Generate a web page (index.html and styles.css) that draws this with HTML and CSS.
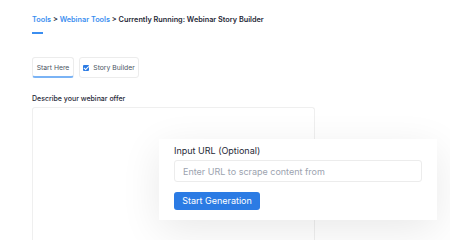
FILE: index.html
```html
<!DOCTYPE html>
<html lang="en">
<head>
  <title>Webinar Story Builder</title>
  <meta charset="UTF-8"/>
  <meta name="viewport" content="width=device-width,initial-scale=1"/>
  <link rel="stylesheet" href="styles.css">
</head>
<body>
  <div class="page">
    <p class="crumbs">
      <a href="#">Tools</a> &gt; <a href="#">Webinar Tools</a> &gt; Currently Running: Webinar Story Builder
    </p>
    <div class="crumb-line"></div>
    <div class="tabs">
      <button class="tab active">Start Here</button>
      <button class="tab story"><span class="check"></span>Story Builder</button>
    </div>
    <label class="field-label" for="offer">Describe your webinar offer</label>
    <textarea id="offer" class="offer"></textarea>
  </div>
  <div class="popup">
    <label class="popup-label" for="url">Input URL (Optional)</label>
    <input type="text" id="url" class="url" placeholder="Enter URL to scrape content from">
    <button class="start">Start Generation</button>
  </div>
</body>
</html>
```

FILE: styles.css
```css
* {
  font-family: Inter, "Noto Sans", sans-serif;
  box-sizing: border-box;
}
html, body {
  margin: 0;
  height: 100%;
  background: white;
  overflow: hidden;
}
.page {
  padding: 15px 0 0 32px;
}
.crumbs {
  margin: 0;
  font-size: 7.3px;
  font-weight: 600;
  color: #1f2937;
  line-height: 10px;
}
.crumbs a {
  color: #3b8ef0;
  text-decoration: none;
}
.crumb-line {
  width: 11px;
  height: 2px;
  background: #3b8ef0;
  margin-top: 7px;
}
.tabs {
  display: flex;
  gap: 5px;
  margin-top: 23px;
}
.tab {
  all: unset;
  height: 21px;
  width: 42px;
  border: 1px solid #ececec;
  border-radius: 3px;
  font-size: 6.8px;
  color: #4b5563;
  display: flex;
  align-items: center;
  justify-content: center;
  gap: 4px;
  box-sizing: border-box;
  white-space: nowrap;
}
.tab.active {
  border-bottom: 2px solid #7ab3f5;
}
.tab.story {
  width: 60px;
}
.check {
  width: 6px;
  height: 6px;
  background: #2b7be4;
  border-radius: 1px;
  position: relative;
  flex-shrink: 0;
}
.check::after {
  content: "";
  position: absolute;
  left: 1.5px;
  top: 0.5px;
  width: 2px;
  height: 3.5px;
  border: solid white;
  border-width: 0 1px 1px 0;
  transform: rotate(45deg);
}
.field-label {
  display: block;
  margin-top: 16px;
  font-size: 7px;
  font-weight: 500;
  color: #1f2937;
}
.offer {
  display: block;
  margin-top: 4px;
  width: 283px;
  height: 135px;
  border: 1px solid #efefef;
  border-bottom-width: 0;
  border-radius: 3px 3px 0 0;
  resize: none;
}
.popup {
  position: absolute;
  left: 159px;
  top: 139px;
  width: 278px;
  height: 81px;
  background: white;
  padding: 6px 15px 0;
  box-shadow: 0 10px 40px rgba(0, 0, 0, 0.09);
}
.popup-label {
  display: block;
  font-size: 9px;
  color: #1f2937;
  line-height: 11px;
}
.url {
  display: block;
  margin-top: 4px;
  width: 248px;
  height: 22px;
  border: 1px solid #ececec;
  border-radius: 3px;
  padding: 0 8px;
  font-size: 9px;
  outline: none;
}
.url::placeholder {
  color: #9ca3af;
}
.start {
  all: unset;
  display: block;
  margin-top: 10px;
  width: 86px;
  height: 18px;
  background: #2b7be4;
  border-radius: 3px;
  color: white;
  font-size: 9px;
  text-align: center;
  line-height: 18px;
  box-sizing: border-box;
}
```
